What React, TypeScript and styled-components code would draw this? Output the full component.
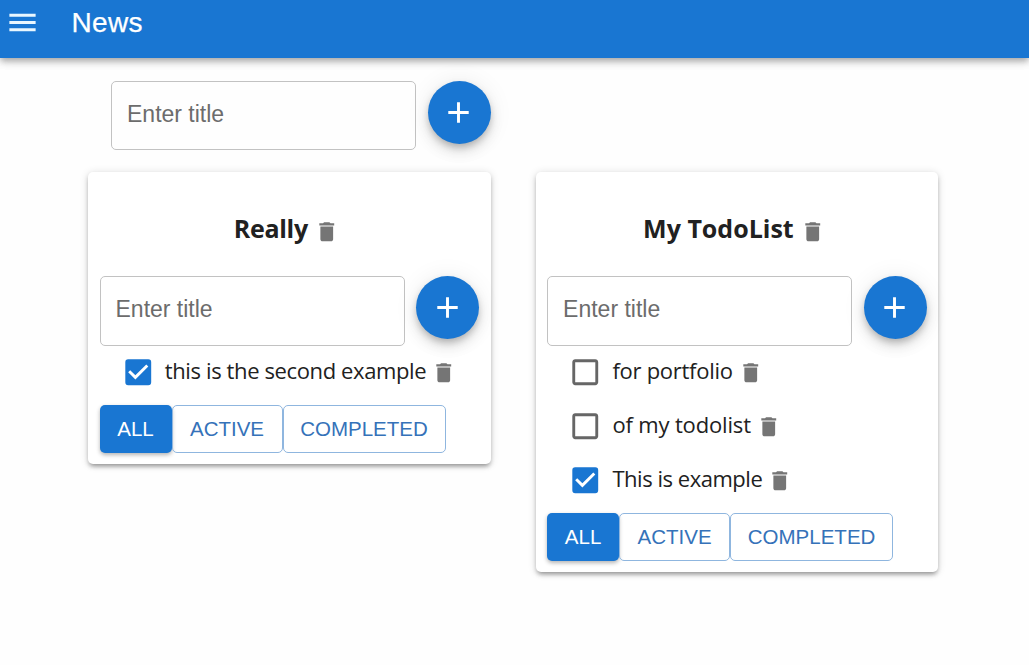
import React from 'react';
import styled, { createGlobalStyle } from 'styled-components';
import { MdAdd, MdCheckBox, MdCheckBoxOutlineBlank, MdDelete, MdMenu } from 'react-icons/md';

const GlobalStyle = createGlobalStyle`
  * { box-sizing: border-box; }
  body { margin: 0; min-height: 100vh; background: #fefefe; color: #212121; }
  button, input { font-family: "Liberation Sans", Arial, sans-serif; }
  svg { display: block; flex: none; }
`;

const AppBar = styled.header`
  height: 58px;
  padding: 0 5.3px 13px;
  display: flex;
  align-items: center;
  background: #1976d2;
  color: #fff;
  box-shadow: 0 3px 6px -1px rgba(0, 0, 0, 0.22), 0 5px 7px rgba(0, 0, 0, 0.12),
    0 1px 12px rgba(0, 0, 0, 0.1);
`;

const MenuButton = styled.button`
  padding: 0;
  border: 0;
  background: none;
  color: #e9f7ff;
  font-size: 35px;
`;

const AppTitle = styled.div`
  margin-left: 31.2px;
  font: 28px/32px "Liberation Sans", Arial, sans-serif;
  letter-spacing: 0.35px;
  -webkit-text-stroke: 0.25px currentColor;
`;

const Content = styled.main`
  padding: 23px 0 93px 88px;
`;

const AddForm = styled.div<{ $indent?: number }>`
  display: flex;
  align-items: flex-start;
  gap: 11.5px;
  margin-left: ${({ $indent = 0 }) => $indent}px;
`;

const TitleInput = styled.input<{ $height: number }>`
  width: 305px;
  height: ${({ $height }) => $height}px;
  padding: 0 15px 3px;
  border: 1px solid #c2c2c2;
  border-radius: 5px;
  background: transparent;
  color: #212121;
  font-size: 23px;
  outline: 0;
  &::placeholder { color: #6c6c6c; opacity: 1; }
`;

const AddButton = styled.button`
  flex: none;
  width: 63px;
  height: 63px;
  padding: 0 0.6px 1px 0;
  border: 0;
  border-radius: 50%;
  display: flex;
  align-items: center;
  justify-content: center;
  background: #1976d2;
  color: #fff;
  font-size: 35px;
  box-shadow: 0 4px 7px -1px rgba(0, 0, 0, 0.22), 0 8px 14px rgba(0, 0, 0, 0.1),
    0 1px 24px rgba(0, 0, 0, 0.08);
`;

const Lists = styled.div`
  display: flex;
  align-items: flex-start;
  gap: 45px;
  margin-top: 22px;
`;

const Card = styled.section`
  width: 402.6px;
  padding: 0 11.5px 11px;
  border-radius: 5px;
  background: #fff;
  box-shadow: 0 4px 4px -3px rgba(0, 0, 0, 0.25), 0 3px 4px rgba(0, 0, 0, 0.18),
    0 1px 8px rgba(0, 0, 0, 0.14);
`;

const CardTitle = styled.h3<{ $spacing: number }>`
  height: 104px;
  margin: 0;
  padding: 8px 5.5px 0 0;
  display: flex;
  align-items: center;
  justify-content: center;
  gap: 6px;
  font: 700 25px/34px "Open Sans", "Noto Sans", sans-serif;
  letter-spacing: ${({ $spacing }) => $spacing}px;
`;

const DeleteButton = styled.button<{ $drop?: number }>`
  margin-top: ${({ $drop = 2 }) => $drop}px;
  padding: 0;
  border: 0;
  background: none;
  color: #757575;
  font-size: 25.5px;
`;

const Tasks = styled.ul`
  margin: -1px 0 0;
  padding: 0 0 6px 21px;
  list-style: none;
`;

const TaskRow = styled.li`
  height: 54px;
  display: flex;
  align-items: center;
`;

const Checkbox = styled.span<{ $checked: boolean }>`
  color: ${({ $checked }) => ($checked ? '#1976d2' : '#666')};
  font-size: 34.5px;
`;

const TaskText = styled.span<{ $spacing: number }>`
  margin: 0 5.2px 5px 9.8px;
  font: 22px/30px "Open Sans", "Noto Sans", sans-serif;
  letter-spacing: ${({ $spacing }) => $spacing}px;
  white-space: nowrap;
`;

const Filters = styled.div`
  display: flex;
`;

const FilterButton = styled.button<{ $active?: boolean; $width: number }>`
  width: ${({ $width }) => $width}px;
  height: 48px;
  padding: 0 0 1px;
  border: ${({ $active }) => ($active ? '0' : '1px solid #8fb6df')};
  border-radius: 5px;
  background: ${({ $active }) => ($active ? '#1976d2' : 'transparent')};
  color: ${({ $active }) => ($active ? '#fff' : '#3572b9')};
  box-shadow: ${({ $active }) => ($active ? '0 2px 4px rgba(0, 0, 0, 0.3)' : 'none')};
  font-size: 20.5px;
  line-height: 24px;
  letter-spacing: 0;
  text-transform: uppercase;
`;

interface Task {
  text: string;
  done: boolean;
  spacing: number;
}

interface TodoList {
  title: string;
  spacing: number;
  tasks: Task[];
}

const todoLists: TodoList[] = [
  {
    title: 'Really',
    spacing: -0.3,
    tasks: [{ text: 'this is the second example', done: true, spacing: -0.38 }],
  },
  {
    title: 'My TodoList',
    spacing: 0,
    tasks: [
      { text: 'for portfolio', done: false, spacing: -0.27 },
      { text: 'of my todolist', done: false, spacing: -0.16 },
      { text: 'This is example', done: true, spacing: -0.47 },
    ],
  },
];

function AddItem({ indent, height }: { indent?: number; height: number }) {
  return (
    <AddForm $indent={indent}>
      <TitleInput $height={height} placeholder="Enter title" />
      <AddButton aria-label="Add"><MdAdd /></AddButton>
    </AddForm>
  );
}

function TodoCard({ list }: { list: TodoList }) {
  return (
    <Card>
      <CardTitle $spacing={list.spacing}>
        <span>{list.title}</span>
        <DeleteButton $drop={7} aria-label="Delete list"><MdDelete /></DeleteButton>
      </CardTitle>
      <AddItem height={70} />
      <Tasks>
        {list.tasks.map((task) => (
          <TaskRow key={task.text}>
            <Checkbox $checked={task.done}>
              {task.done ? <MdCheckBox /> : <MdCheckBoxOutlineBlank />}
            </Checkbox>
            <TaskText $spacing={task.spacing}>{task.text}</TaskText>
            <DeleteButton $drop={1} aria-label="Delete task"><MdDelete /></DeleteButton>
          </TaskRow>
        ))}
      </Tasks>
      <Filters>
        <FilterButton $active $width={72}>All</FilterButton>
        <FilterButton $width={111}>Active</FilterButton>
        <FilterButton $width={163}>Completed</FilterButton>
      </Filters>
    </Card>
  );
}

export default function App() {
  return (
    <>
      <GlobalStyle />
      <AppBar>
        <MenuButton aria-label="Menu"><MdMenu /></MenuButton>
        <AppTitle>News</AppTitle>
      </AppBar>
      <Content>
        <AddItem indent={23} height={69} />
        <Lists>
          {todoLists.map((list) => <TodoCard key={list.title} list={list} />)}
        </Lists>
      </Content>
    </>
  );
}
